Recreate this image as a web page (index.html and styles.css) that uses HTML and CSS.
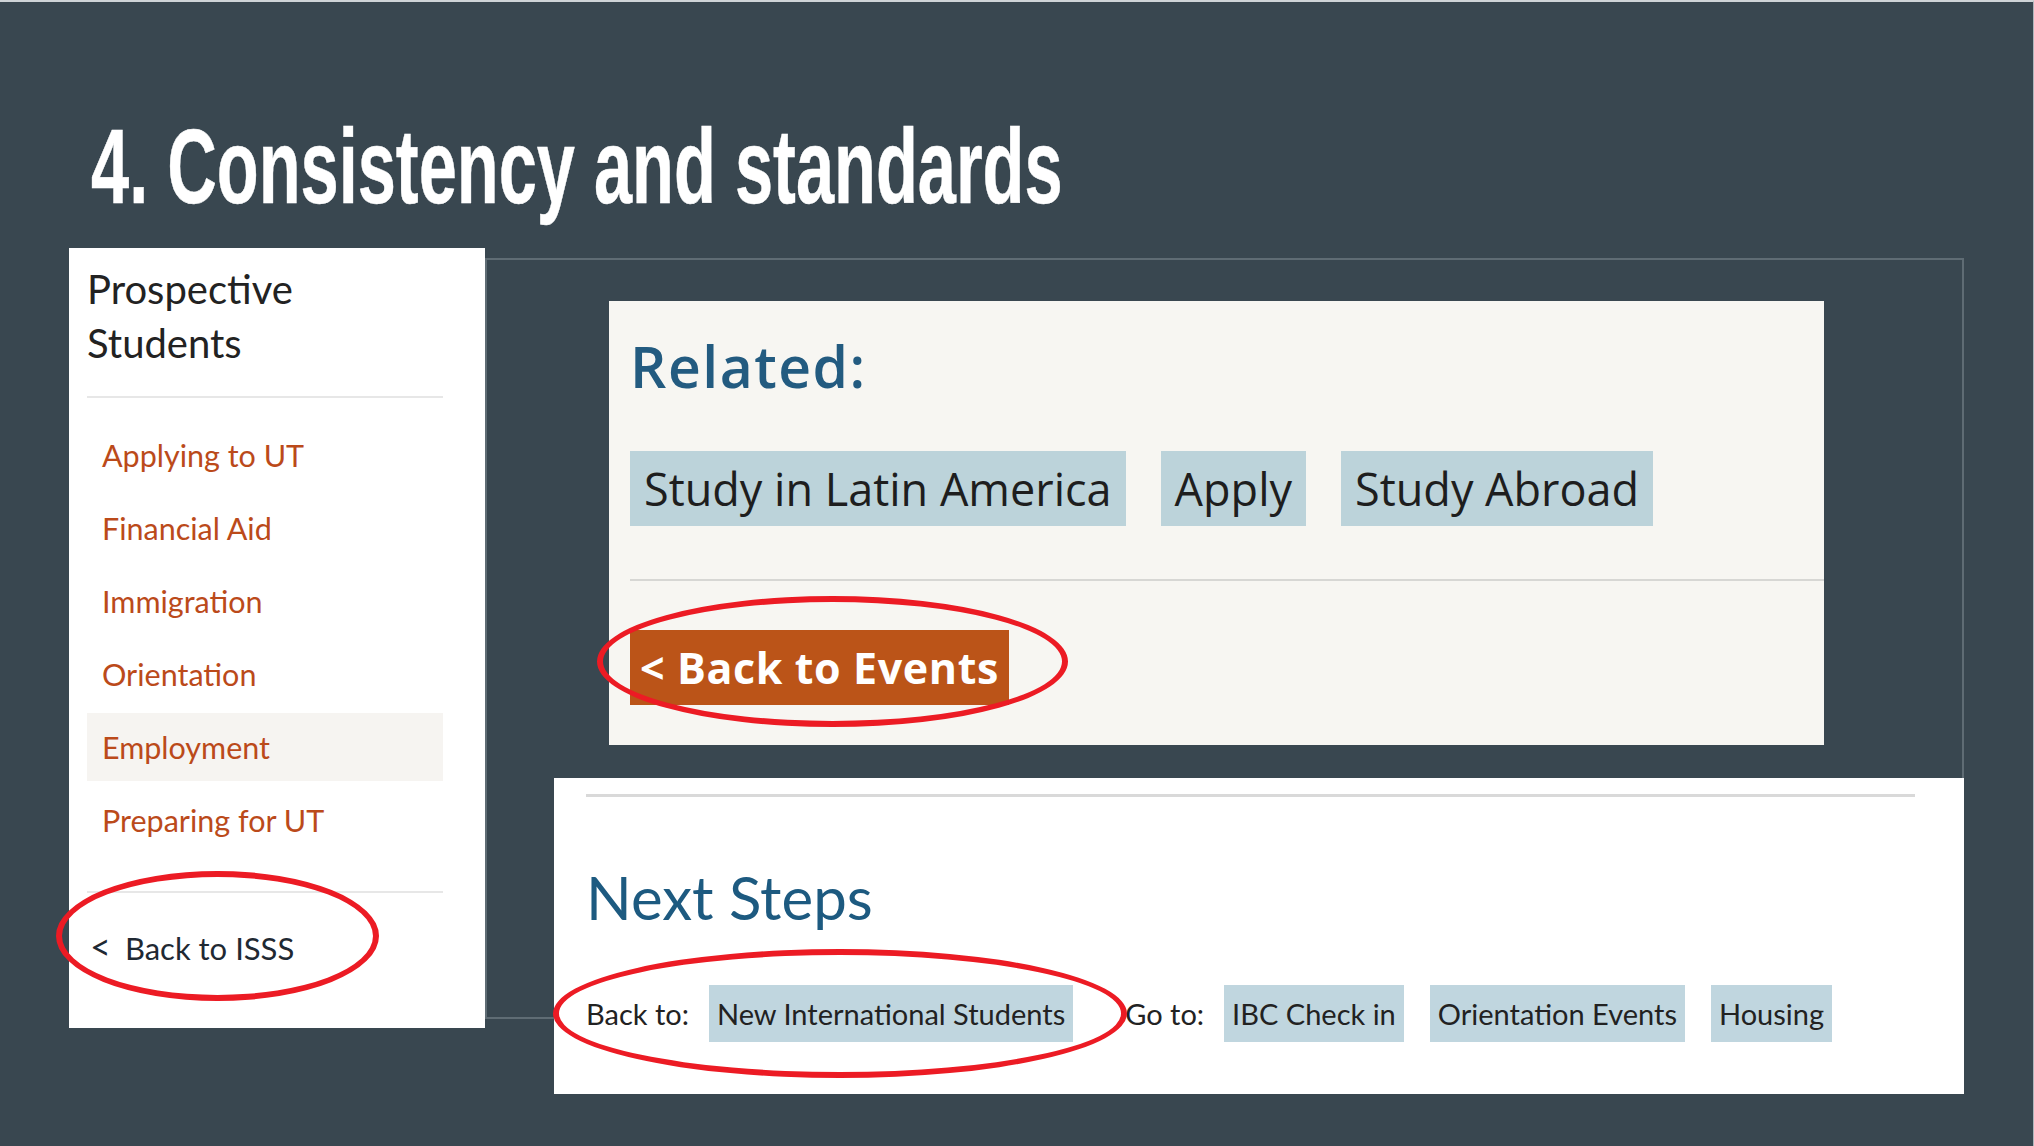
FILE: index.html
```html
<!DOCTYPE html>
<html lang="en">
<head>
<meta charset="utf-8">
<title>4. Consistency and standards</title>
<link rel="stylesheet" href="styles.css">
</head>
<body>
<div class="slide">
  <header class="header">
    <h1 class="title">4. Consistency and standards</h1>
  </header>
  <div class="collage">
    <div class="frame"></div>

    <aside class="shot sidebar">
      <h2 class="side-heading">Prospective<br>Students</h2>
      <hr class="side-rule">
      <ul class="side-links">
        <li class="side-link">Applying to UT</li>
        <li class="side-link">Financial Aid</li>
        <li class="side-link">Immigration</li>
        <li class="side-link">Orientation</li>
        <li class="side-link is-active">Employment</li>
        <li class="side-link">Preparing for UT</li>
      </ul>
      <hr class="side-rule side-rule-bottom">
      <div class="side-back"><span class="chev">&lt;</span>Back to ISSS</div>
    </aside>

    <section class="shot related">
      <h2 class="related-title">Related:</h2>
      <div class="related-tags">
        <span class="rtag">Study in Latin America</span>
        <span class="rtag">Apply</span>
        <span class="rtag">Study Abroad</span>
      </div>
      <hr class="related-rule">
      <div class="events-btn">&lt; Back to Events</div>
    </section>

    <section class="shot nextsteps">
      <div class="ns-rule"></div>
      <h2 class="ns-title">Next Steps</h2>
      <div class="ns-row">
        <span class="ns-label">Back to:</span>
        <span class="ntag ntag-back">New International Students</span>
        <span class="ns-label ns-goto">Go to:</span>
        <span class="ntag">IBC Check in</span>
        <span class="ntag">Orientation Events</span>
        <span class="ntag">Housing</span>
      </div>
    </section>

    <div class="ring ring-isss"></div>
    <div class="ring ring-events"></div>
    <div class="ring ring-next"></div>
  </div>
</div>
</body>
</html>
```

FILE: styles.css
```css
* { box-sizing: border-box; }

html, body {
  margin: 0;
  padding: 0;
  background: #394750;
}

.slide {
  width: 2034px;
  height: 1146px;
  background: #394750;
  border-top: 2px solid #cfd4d7;
  border-right: 1px solid #aeb6bb;
  overflow: hidden;
}

.header {
  height: 238px;
  padding: 112px 0 0 91px;
}

.title {
  margin: 0;
  display: inline-block;
  font-family: "Liberation Sans", Arial, sans-serif;
  font-weight: 700;
  font-size: 105px;
  line-height: 105px;
  color: #ffffff;
  white-space: nowrap;
  transform: scaleX(0.653);
  transform-origin: left top;
  -webkit-text-stroke: 0.5px #ffffff;
}

.collage {
  position: relative;
  height: 906px;
}

.frame {
  position: absolute;
  left: 485px;
  top: 18px;
  width: 1479px;
  height: 761px;
  border: 2px solid #5f6c74;
}

.shot {
  position: absolute;
}

/* ---------- sidebar ---------- */
.sidebar {
  left: 69px;
  top: 8px;
  width: 416px;
  height: 780px;
  background: #ffffff;
  padding: 14px 42px 0 18px;
  font-family: Lato, "Open Sans", sans-serif;
}

.side-heading {
  margin: 0;
  font-weight: 400;
  font-size: 40px;
  line-height: 54px;
  color: #222222;
}

.side-rule {
  margin: 26px 0 0 0;
  border: 0;
  height: 2px;
  background: #e7e7e7;
}

.side-links {
  list-style: none;
  margin: 23px 0 0 0;
  padding: 0;
}

.side-link {
  height: 68px;
  line-height: 68px;
  margin-bottom: 5px;
  padding-left: 15px;
  font-size: 30.5px;
  color: #bb4a1a;
}

.side-link:last-child { margin-bottom: 0; }

.side-link.is-active {
  background: #f6f4f1;
}

.side-rule-bottom {
  margin-top: 37px;
}

.side-back {
  margin-top: 33px;
  padding-left: 3px;
  font-size: 31px;
  line-height: 40px;
  color: #1f2933;
}

.chev {
  font-size: 36px;
  margin-right: 14px;
}

/* ---------- related panel ---------- */
.related {
  left: 609px;
  top: 61px;
  width: 1215px;
  height: 444px;
  background: #f7f6f2;
  padding: 37px 0 0 21px;
  font-family: "Open Sans", "Noto Sans", sans-serif;
}

.related-title {
  margin: 0;
  font-weight: 600;
  font-size: 57px;
  line-height: 57px;
  letter-spacing: 1.5px;
  color: #235b80;
}

.related-tags {
  display: flex;
  gap: 35px;
  margin-top: 56px;
}

.rtag {
  display: flex;
  align-items: center;
  height: 75px;
  padding: 0 14px;
  background: #bcd3da;
  color: #1e1e1e;
  font-size: 45px;
}

.related-rule {
  margin: 53px 0 0 0;
  border: 0;
  height: 2px;
  background: #d7d7d4;
}

.events-btn {
  display: inline-flex;
  align-items: center;
  margin-top: 49px;
  height: 75px;
  padding: 0 10px;
  background: #bb5418;
  color: #ffffff;
  font-weight: 700;
  font-size: 43px;
  letter-spacing: 0.6px;
}

/* ---------- next steps panel ---------- */
.nextsteps {
  left: 554px;
  top: 538px;
  width: 1410px;
  height: 316px;
  background: #ffffff;
  padding: 16px 49px 0 32px;
  font-family: Lato, "Open Sans", sans-serif;
}

.ns-rule {
  height: 3px;
  background: #d9d9d9;
}

.ns-title {
  margin: 70px 0 0 0;
  font-weight: 400;
  font-size: 60px;
  line-height: 60px;
  color: #1d5a80;
}

.ns-row {
  display: flex;
  align-items: center;
  margin-top: 57px;
  height: 58px;
  font-size: 29px;
  color: #222222;
}

.ns-label {
  margin-right: 20px;
}

.ns-goto {
  margin-left: 52px;
}

.ntag {
  display: flex;
  align-items: center;
  height: 57px;
  padding: 0 8px;
  background: #c0d6df;
  margin-right: 26px;
}

.ntag-back {
  margin-right: 0;
}

/* ---------- annotation rings ---------- */
.ring {
  position: absolute;
  border: 6px solid #ec1b24;
  border-radius: 50%;
}

.ring-isss {
  left: 56px;
  top: 631px;
  width: 323px;
  height: 130px;
}

.ring-events {
  left: 597px;
  top: 356px;
  width: 471px;
  height: 131px;
}

.ring-next {
  left: 553px;
  top: 709px;
  width: 574px;
  height: 129px;
}
```
